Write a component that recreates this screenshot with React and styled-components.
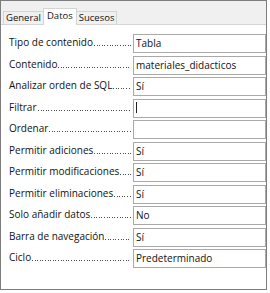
import React from "react";
import styled, { createGlobalStyle } from "styled-components";

const Global = createGlobalStyle`
  html, body { margin: 0; padding: 0; background: #ffffff; }
  body { font-family: "Open Sans", "Noto Sans", sans-serif; }
`;

const Frame = styled.div`
  width: 267px;
  height: 290px;
  box-sizing: border-box;
  border: 1px solid #7d7d7d;
  display: flex;
  flex-direction: column;
  background: #ffffff;
`;

const TabStrip = styled.div`
  height: 23px;
  background: #f0f0f0;
  border-bottom: 1px solid #d4d4d4;
  display: flex;
  align-items: flex-end;
  padding-left: 2px;
`;

const Tab = styled.div`
  box-sizing: border-box;
  height: ${(p) => (p.$active ? "17px" : "13px")};
  margin: 0 ${(p) => (p.$active ? "-1px" : "0")} ${(p) => (p.$active ? "-1px" : "0")};
  padding: 0 ${(p) => (p.$active ? "3px" : "2px")};
  border: 1px solid #d4d4d4;
  border-bottom: none;
  background: ${(p) => (p.$active ? "#ffffff" : "#f0f0f0")};
  position: relative;
  z-index: ${(p) => (p.$active ? 1 : 0)};
  font-size: 9.5px;
  line-height: ${(p) => (p.$active ? "14px" : "11px")};
  color: #111;
  white-space: nowrap;
`;

const Panel = styled.div`
  flex: 1;
  display: flex;
  flex-direction: column;
  padding: 9px 0 0 8px;
`;

const Row = styled.div`
  height: 21.5px;
  display: flex;
  align-items: flex-start;
`;

const Label = styled.div`
  width: 124px;
  height: 19px;
  display: flex;
  align-items: flex-end;
  padding-bottom: 5px;
  box-sizing: border-box;
`;

const LabelText = styled.span`
  font-size: 10px;
  line-height: 12px;
  color: #111;
  white-space: nowrap;
`;

const Leader = styled.span`
  flex: 1;
  height: 1px;
  margin: 0 2px 2px 1px;
  background-image: repeating-linear-gradient(
    to right,
    #4a4a4a 0,
    #4a4a4a 1px,
    transparent 1px,
    transparent 2.6px
  );
`;

const Field = styled.div`
  flex: 1;
  box-sizing: border-box;
  height: 19px;
  border: 1px solid #a9a9a9;
  background: #fff;
  padding-left: 2px;
  font-size: 10px;
  line-height: 17px;
  color: #111;
  white-space: nowrap;
`;

const Caret = styled.span`
  display: inline-block;
  width: 1px;
  height: 11px;
  background: #222;
  vertical-align: middle;
  margin-top: -2px;
`;

const rows = [
  ["Tipo de contenido", "Tabla"],
  ["Contenido", "materiales_didacticos"],
  ["Analizar orden de SQL", "Sí"],
  ["Filtrar", null, true],
  ["Ordenar", ""],
  ["Permitir adiciones", "Sí"],
  ["Permitir modificaciones", "Sí"],
  ["Permitir eliminaciones", "Sí"],
  ["Solo añadir datos", "No"],
  ["Barra de navegación", "Sí"],
  ["Ciclo", "Predeterminado"],
];

export default function App() {
  return (
    <>
      <Global />
      <Frame>
        <TabStrip>
          <Tab>General</Tab>
          <Tab $active>Datos</Tab>
          <Tab>Sucesos</Tab>
        </TabStrip>
        <Panel>
          {rows.map(([label, value, caret]) => (
            <Row key={label}>
              <Label>
                <LabelText>{label}</LabelText>
                <Leader />
              </Label>
              <Field>{caret ? <Caret /> : value}</Field>
            </Row>
          ))}
        </Panel>
      </Frame>
    </>
  );
}
